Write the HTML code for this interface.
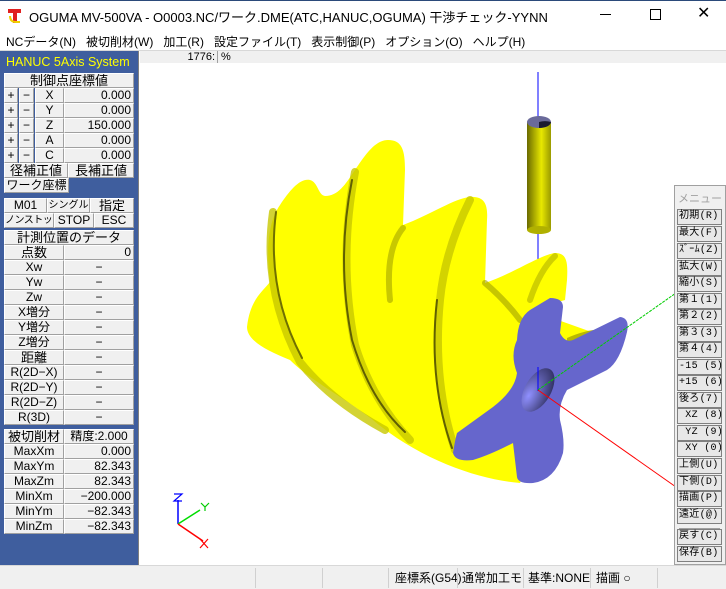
<!DOCTYPE html>
<html><head><meta charset="utf-8"><style>
*{margin:0;padding:0;box-sizing:border-box}
body{width:726px;height:589px;overflow:hidden;background:#fff;font-family:"Liberation Sans","Noto Sans CJK JP",sans-serif;font-size:12px;color:#000;position:relative}
.a{position:absolute}
.c{position:absolute;background:#f0f0f0;border:1px solid #fff;border-right-color:#a0a0a0;border-bottom-color:#a0a0a0;height:15px;line-height:13px;font-size:12px;text-align:center;white-space:nowrap;overflow:hidden}
.r{text-align:right;padding-right:2px}
.m{position:absolute;left:677px;width:45px;height:16px;background:#e8e8e8;border:1px solid #808080;font-family:"Liberation Mono","Noto Sans CJK JP",monospace;font-size:10px;line-height:14px;padding-left:1px;white-space:nowrap;letter-spacing:0.3px}
.sb{position:absolute;top:568px;height:20px;border-left:1px solid #d0d0d0;font-size:12px;line-height:20px;padding-left:6px;white-space:nowrap}
</style></head><body>
<div class="a" style="left:0;top:0;width:726px;height:1px;background:#2b4a7a"></div>
<svg class="a" style="left:7px;top:8px" width="16" height="16"><rect x="1" y="1" width="13" height="4" fill="#e02020"/><rect x="6" y="1" width="4" height="14" fill="#e02020"/><path d="M3 8 Q3 14 9 14 L13 14" stroke="#f0d000" stroke-width="2" fill="none"/></svg>
<div class="a" style="left:29px;top:7px;font-size:13px">OGUMA MV-500VA - O0003.NC/ワーク.DME(ATC,HANUC,OGUMA) 干渉チェック-YYNN</div>
<div class="a" style="left:600px;top:14px;width:11px;height:1px;background:#000"></div>
<div class="a" style="left:650px;top:9px;width:11px;height:11px;border:1px solid #000"></div>
<div class="a" style="left:697px;top:3px;font-size:16px">✕</div>
<div class="a" style="left:6px;top:33px;font-size:12px;word-spacing:0">NCデータ(N)&nbsp;&nbsp;&nbsp;被切削材(W)&nbsp;&nbsp;&nbsp;加工(R)&nbsp;&nbsp;&nbsp;設定ファイル(T)&nbsp;&nbsp;&nbsp;表示制御(P)&nbsp;&nbsp;&nbsp;オプション(O)&nbsp;&nbsp;&nbsp;ヘルプ(H)</div>
<div class="a" style="left:0;top:50px;width:726px;height:1px;background:#d8d8d8"></div>
<div class="a" style="left:0;top:51px;width:139px;height:514px;background:#3f5e9e;border-right:1px solid #808080"></div>
<div class="a" style="left:6px;top:55px;color:#ffff00;font-size:12.5px">HANUC 5Axis System</div>
<div class="c" style="left:4px;top:73px;width:130px;font-size:13px">制御点座標値</div>
<div class="c" style="left:4px;top:88px;width:14px">+</div><div class="c" style="left:19px;top:88px;width:15px">−</div><div class="c" style="left:35px;top:88px;width:29px">X</div><div class="c r" style="left:64px;top:88px;width:70px">0.000</div>
<div class="c" style="left:4px;top:103px;width:14px">+</div><div class="c" style="left:19px;top:103px;width:15px">−</div><div class="c" style="left:35px;top:103px;width:29px">Y</div><div class="c r" style="left:64px;top:103px;width:70px">0.000</div>
<div class="c" style="left:4px;top:118px;width:14px">+</div><div class="c" style="left:19px;top:118px;width:15px">−</div><div class="c" style="left:35px;top:118px;width:29px">Z</div><div class="c r" style="left:64px;top:118px;width:70px">150.000</div>
<div class="c" style="left:4px;top:133px;width:14px">+</div><div class="c" style="left:19px;top:133px;width:15px">−</div><div class="c" style="left:35px;top:133px;width:29px">A</div><div class="c r" style="left:64px;top:133px;width:70px">0.000</div>
<div class="c" style="left:4px;top:148px;width:14px">+</div><div class="c" style="left:19px;top:148px;width:15px">−</div><div class="c" style="left:35px;top:148px;width:29px">C</div><div class="c r" style="left:64px;top:148px;width:70px">0.000</div>
<div class="c" style="left:4px;top:163px;width:64px;font-size:13px">径補正値</div><div class="c" style="left:68px;top:163px;width:66px;font-size:13px">長補正値</div>
<div class="c" style="left:4px;top:178px;width:65px;font-size:12px">ワーク座標</div>
<div class="c" style="left:4px;top:198px;width:43px">M01</div><div class="c" style="left:47px;top:198px;width:43px;font-size:10px">シングル</div><div class="c" style="left:90px;top:198px;width:44px;font-size:13px">指定</div>
<div class="c" style="left:4px;top:213px;width:50px;font-size:10px;letter-spacing:-0.5px">ノンストップ</div><div class="c" style="left:54px;top:213px;width:40px">STOP</div><div class="c" style="left:94px;top:213px;width:40px">ESC</div>
<div class="c" style="left:4px;top:230px;width:130px;font-size:13px">計測位置のデータ</div>
<div class="c" style="left:4px;top:245px;width:60px;font-size:13px">点数</div><div class="c r" style="left:64px;top:245px;width:70px">0</div>
<div class="c" style="left:4px;top:260px;width:60px">Xw</div><div class="c" style="left:64px;top:260px;width:70px">−</div>
<div class="c" style="left:4px;top:275px;width:60px">Yw</div><div class="c" style="left:64px;top:275px;width:70px">−</div>
<div class="c" style="left:4px;top:290px;width:60px">Zw</div><div class="c" style="left:64px;top:290px;width:70px">−</div>
<div class="c" style="left:4px;top:305px;width:60px">X増分</div><div class="c" style="left:64px;top:305px;width:70px">−</div>
<div class="c" style="left:4px;top:320px;width:60px">Y増分</div><div class="c" style="left:64px;top:320px;width:70px">−</div>
<div class="c" style="left:4px;top:335px;width:60px">Z増分</div><div class="c" style="left:64px;top:335px;width:70px">−</div>
<div class="c" style="left:4px;top:350px;width:60px;font-size:13px">距離</div><div class="c" style="left:64px;top:350px;width:70px">−</div>
<div class="c" style="left:4px;top:365px;width:60px">R(2D−X)</div><div class="c" style="left:64px;top:365px;width:70px">−</div>
<div class="c" style="left:4px;top:380px;width:60px">R(2D−Y)</div><div class="c" style="left:64px;top:380px;width:70px">−</div>
<div class="c" style="left:4px;top:395px;width:60px">R(2D−Z)</div><div class="c" style="left:64px;top:395px;width:70px">−</div>
<div class="c" style="left:4px;top:410px;width:60px">R(3D)</div><div class="c" style="left:64px;top:410px;width:70px">−</div>
<div class="c" style="left:4px;top:429px;width:60px;font-size:13px">被切削材</div><div class="c" style="left:64px;top:429px;width:70px">精度:2.000</div>
<div class="c" style="left:4px;top:444px;width:60px">MaxXm</div><div class="c r" style="left:64px;top:444px;width:70px">0.000</div>
<div class="c" style="left:4px;top:459px;width:60px">MaxYm</div><div class="c r" style="left:64px;top:459px;width:70px">82.343</div>
<div class="c" style="left:4px;top:474px;width:60px">MaxZm</div><div class="c r" style="left:64px;top:474px;width:70px">82.343</div>
<div class="c" style="left:4px;top:489px;width:60px">MinXm</div><div class="c r" style="left:64px;top:489px;width:70px">−200.000</div>
<div class="c" style="left:4px;top:504px;width:60px">MinYm</div><div class="c r" style="left:64px;top:504px;width:70px">−82.343</div>
<div class="c" style="left:4px;top:519px;width:60px">MinZm</div><div class="c r" style="left:64px;top:519px;width:70px">−82.343</div>
<div class="a" style="left:140px;top:51px;width:586px;height:12px;background:#f0f0f0"></div>
<div class="a" style="left:140px;top:51px;width:78px;height:12px;text-align:right;font-size:11px;line-height:12px;padding-right:2px;border-right:1px solid #a0a0a0">1776:</div>
<div class="a" style="left:221px;top:51px;font-size:11px;line-height:12px">%</div>
<svg class="a" style="left:0;top:0" width="726" height="589">
<defs>
<linearGradient id="cy" x1="0" x2="1"><stop offset="0" stop-color="#6a6a00"/><stop offset="0.6" stop-color="#e8e800"/><stop offset="1" stop-color="#9a9a00"/></linearGradient>
<radialGradient id="h" cx="0.3" cy="0.7" r="0.8"><stop offset="0" stop-color="#9090ff"/><stop offset="1" stop-color="#303060"/></radialGradient>
</defs>
<line x1="538" y1="72" x2="538" y2="300" stroke="#0000ff" stroke-width="1"/>
<path d="M247 327 C250 300 262 292 270 282 C266 250 268 222 280 205 C290 190 300 178 310 180 C318 182 318 195 325 196 C338 196 345 185 355 170 C365 155 375 140 388 140 C402 140 405 150 405 170 L403 225 C430 215 455 198 470 197 C485 196 488 205 487 220 L485 283 C510 275 540 255 555 253 C567 253 568 262 567 280 L565 300 L530 310 L600 335 L600 362 L560 380 L520 483 C480 480 420 460 373 420 C340 395 310 380 290 360 C265 350 247 340 247 327 Z" fill="#ffff00"/>
<path d="M567 338 Q590 328 605 330 L600 362 L567 372 Z" fill="#b8b800"/>
<g fill="none" stroke-linecap="round">
<path d="M273 212 Q262 290 300 362 Q330 400 385 430" stroke="#c8c800" stroke-width="8" opacity="0.8"/>
<path d="M276 212 Q266 290 302 358" stroke="#707000" stroke-width="2"/>
<path d="M355 172 Q338 260 355 345 Q372 400 410 440" stroke="#c8c800" stroke-width="8" opacity="0.8"/>
<path d="M352 180 Q336 260 352 340 Q370 400 405 432" stroke="#606000" stroke-width="2"/>
<path d="M403 228 Q385 250 390 300" stroke="#b0b000" stroke-width="6" opacity="0.7"/>
<path d="M470 200 Q445 250 440 300 Q432 380 455 450" stroke="#c8c800" stroke-width="8" opacity="0.8"/>
<path d="M437 300 Q428 380 452 448" stroke="#606000" stroke-width="2"/>
<path d="M485 283 Q505 300 520 320" stroke="#a0a000" stroke-width="6" opacity="0.6"/>
<path d="M555 256 Q540 270 530 300" stroke="#b0b000" stroke-width="6" opacity="0.6"/>
</g>
<path d="M550 298 Q563 298 563 307 L560 333 Q565 343 573 340 L620 317 Q630 318 627 332 Q620 362 607 370 L567 390 Q558 405 560 420 Q565 440 563 453 Q555 480 533 483 Q518 484 517 477 L513 443 Q490 455 473 460 Q455 462 453 453 Q455 440 457 433 L493 407 Q515 390 517 373 Q510 355 517 340 Q518 318 530 310 Z" fill="#6666cc"/>
<ellipse cx="538" cy="390" rx="13" ry="24" transform="rotate(30 538 390)" fill="url(#h)"/>
<line x1="538" y1="367" x2="538" y2="391" stroke="#0000ff"/>
<rect x="527" y="122" width="24" height="108" fill="url(#cy)"/>
<ellipse cx="539" cy="230" rx="12" ry="4" fill="#b0b000"/>
<ellipse cx="539" cy="122" rx="12" ry="6" fill="#6a6a9a"/>
<path d="M539 122 a12 6 0 0 1 12 0 a12 6 0 0 1 -12 6 Z" fill="#1a1a30"/>
<line x1="538" y1="390" x2="676" y2="293" stroke="#00cc00" stroke-dasharray="3 1"/>
<line x1="538" y1="390" x2="676" y2="487" stroke="#ff0000"/>
<line x1="178" y1="524" x2="178" y2="500" stroke="#0000ff" stroke-width="1.5"/>
<line x1="178" y1="524" x2="200" y2="510" stroke="#00dd00" stroke-width="1.5"/>
<line x1="178" y1="524" x2="203" y2="541" stroke="#ff0000" stroke-width="1.5"/>
<path d="M174 494 H182 L174 501 H182" stroke="#0000ff" fill="none" stroke-width="1.2"/>
<path d="M201 503 L205 507 L209 503 M205 507 V511" stroke="#00cc00" fill="none" stroke-width="1.2"/>
<path d="M200 539 L208 548 M208 539 L200 548" stroke="#ff0000" fill="none" stroke-width="1.2"/>
</svg>
<div class="a" style="left:674px;top:185px;width:52px;height:380px;background:#f0f0f0;border:1px solid #a0a0a0"></div>
<div class="a" style="left:678px;top:190px;color:#a0a0a0;font-size:11px">メニュー</div>
<div class="m" style="top:209px">初期(R)</div>
<div class="m" style="top:226px">最大(F)</div>
<div class="m" style="top:243px">ｽﾞｰﾑ(Z)</div>
<div class="m" style="top:260px">拡大(W)</div>
<div class="m" style="top:276px">縮小(S)</div>
<div class="m" style="top:293px">第１(1)</div>
<div class="m" style="top:309px">第２(2)</div>
<div class="m" style="top:326px">第３(3)</div>
<div class="m" style="top:342px">第４(4)</div>
<div class="m" style="top:359px">-15 (5)</div>
<div class="m" style="top:375px">+15 (6)</div>
<div class="m" style="top:392px">後ろ(7)</div>
<div class="m" style="top:408px">&nbsp;XZ (8)</div>
<div class="m" style="top:425px">&nbsp;YZ (9)</div>
<div class="m" style="top:441px">&nbsp;XY (0)</div>
<div class="m" style="top:458px">上側(U)</div>
<div class="m" style="top:475px">下側(D)</div>
<div class="m" style="top:491px">描画(P)</div>
<div class="m" style="top:508px">遠近(@)</div>
<div class="a" style="left:679px;top:528px;width:41px;height:1px;background:#a0a0a0"></div>
<div class="m" style="top:529px">戻す(C)</div>
<div class="m" style="top:546px">保存(B)</div>
<div class="a" style="left:0;top:565px;width:726px;height:24px;background:#f0f0f0;border-top:1px solid #d8d8d8"></div>
<div class="sb" style="left:255px"></div>
<div class="sb" style="left:322px"></div>
<div class="sb" style="left:388px">座標系(G54)</div>
<div class="sb" style="left:457px;width:66px;overflow:hidden;padding-left:4px">通常加工モード</div>
<div class="sb" style="left:523px;padding-left:4px">基準:NONE</div>
<div class="sb" style="left:590px;padding-left:5px">描画 ○</div>
<div class="sb" style="left:657px"></div>
</body></html>
